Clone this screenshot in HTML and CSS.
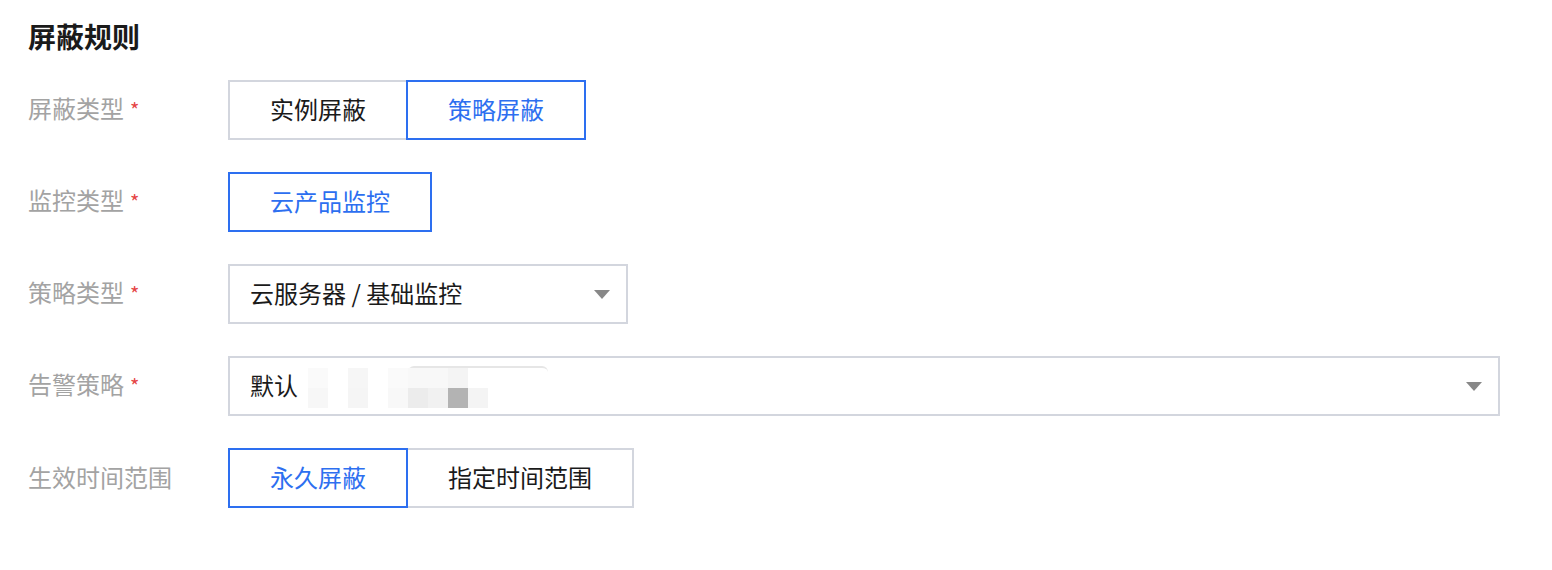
FILE: index.html
```html
<!DOCTYPE html>
<html lang="zh-CN">
<head>
    <meta charset="UTF-8">
    <meta name="viewport" content="width=device-width, initial-scale=1.0">
    <title>屏蔽规则</title>
    <link rel="stylesheet" href="styles.css">
</head>
<body>
    <div class="page">
        <h2 class="title">屏蔽规则</h2>

        <div class="form">
            <div class="row">
                <div class="label">屏蔽类型<span class="req">*</span></div>
                <div class="seg">
                    <div class="seg-btn">实例屏蔽</div>
                    <div class="seg-btn active">策略屏蔽</div>
                </div>
            </div>

            <div class="row">
                <div class="label">监控类型<span class="req">*</span></div>
                <div class="seg">
                    <div class="seg-btn active">云产品监控</div>
                </div>
            </div>

            <div class="row">
                <div class="label">策略类型<span class="req">*</span></div>
                <div class="select select-small">
                    <span class="select-text">云服务器 / 基础监控</span>
                    <span class="arrow"></span>
                </div>
            </div>

            <div class="row">
                <div class="label">告警策略<span class="req">*</span></div>
                <div class="select select-wide">
                    <span class="select-text">默认</span>
                    <div class="mosaic">
                        <span class="mosaic-top"></span>
                        <div class="mosaic-grid">
                            <i style="background:#fafafa"></i><i></i><i style="background:#f6f6f6"></i><i></i><i style="background:#fafafa"></i><i style="background:#f8f8f8"></i><i style="background:#f8f8f8"></i><i style="background:#f4f4f4"></i><i></i>
                            <i style="background:#f7f7f7"></i><i></i><i style="background:#f5f5f5"></i><i></i><i style="background:#f8f8f8"></i><i style="background:#ececec"></i><i style="background:#f1f1f1"></i><i style="background:#b3b3b3"></i><i style="background:#f4f4f4"></i>
                        </div>
                    </div>
                    <span class="arrow"></span>
                </div>
            </div>

            <div class="row">
                <div class="label">生效时间范围</div>
                <div class="seg">
                    <div class="seg-btn active">永久屏蔽</div>
                    <div class="seg-btn">指定时间范围</div>
                </div>
            </div>
        </div>
    </div>
</body>
</html>
```

FILE: styles.css
```css
body {
    margin: 0;
    background-color: #ffffff;
    font-family: "Noto Sans CJK SC", "Noto Sans", sans-serif;
    color: #222222;
}

.page {
    padding: 18px 28px 20px;
}

.title {
    margin: 0;
    font-size: 28px;
    line-height: 36px;
    font-weight: bold;
    color: #1a1a1a;
}

.form {
    margin-top: 26px;
}

.row {
    display: flex;
    align-items: center;
    height: 60px;
    margin-bottom: 32px;
}

.label {
    width: 200px;
    flex-shrink: 0;
    font-size: 24px;
    line-height: 30px;
    padding-bottom: 2px;
    color: #a3a3a3;
}

.req {
    color: #e54545;
    margin-left: 6px;
    font-size: 20px;
}

.seg {
    display: flex;
    height: 60px;
}

.seg-btn {
    box-sizing: border-box;
    height: 60px;
    padding: 0 40px 2px;
    border: 2px solid #d3d6de;
    font-size: 24px;
    line-height: 54px;
    color: #1a1a1a;
    background-color: #fff;
    position: relative;
}

.seg-btn + .seg-btn {
    margin-left: -2px;
}

.seg-btn.active {
    border-color: #2d6ff0;
    color: #2d6ff0;
    z-index: 1;
}

.select {
    box-sizing: border-box;
    height: 60px;
    border: 2px solid #d3d6de;
    display: flex;
    align-items: center;
    padding: 0 16px 0 20px;
    position: relative;
}

.select-small {
    width: 400px;
}

.select-wide {
    width: 1272px;
}

.select-text {
    font-size: 24px;
    line-height: 30px;
    padding-bottom: 2px;
    color: #1a1a1a;
}

.arrow {
    margin-left: auto;
    width: 0;
    height: 0;
    border-left: 8px solid transparent;
    border-right: 8px solid transparent;
    border-top: 9px solid #888888;
}

.mosaic {
    position: absolute;
    left: 78px;
    top: 8px;
    width: 260px;
    height: 42px;
}

.mosaic-top {
    position: absolute;
    left: 100px;
    top: 0;
    width: 140px;
    height: 4px;
    border-top: 2px solid #e6e6e6;
    border-radius: 40px 40px 0 0;
}

.mosaic-grid {
    position: absolute;
    left: 0;
    top: 2px;
    display: grid;
    grid-template-columns: repeat(9, 20px);
    grid-auto-rows: 20px;
}

.mosaic-grid i {
    display: block;
    background: #ffffff;
}
```
